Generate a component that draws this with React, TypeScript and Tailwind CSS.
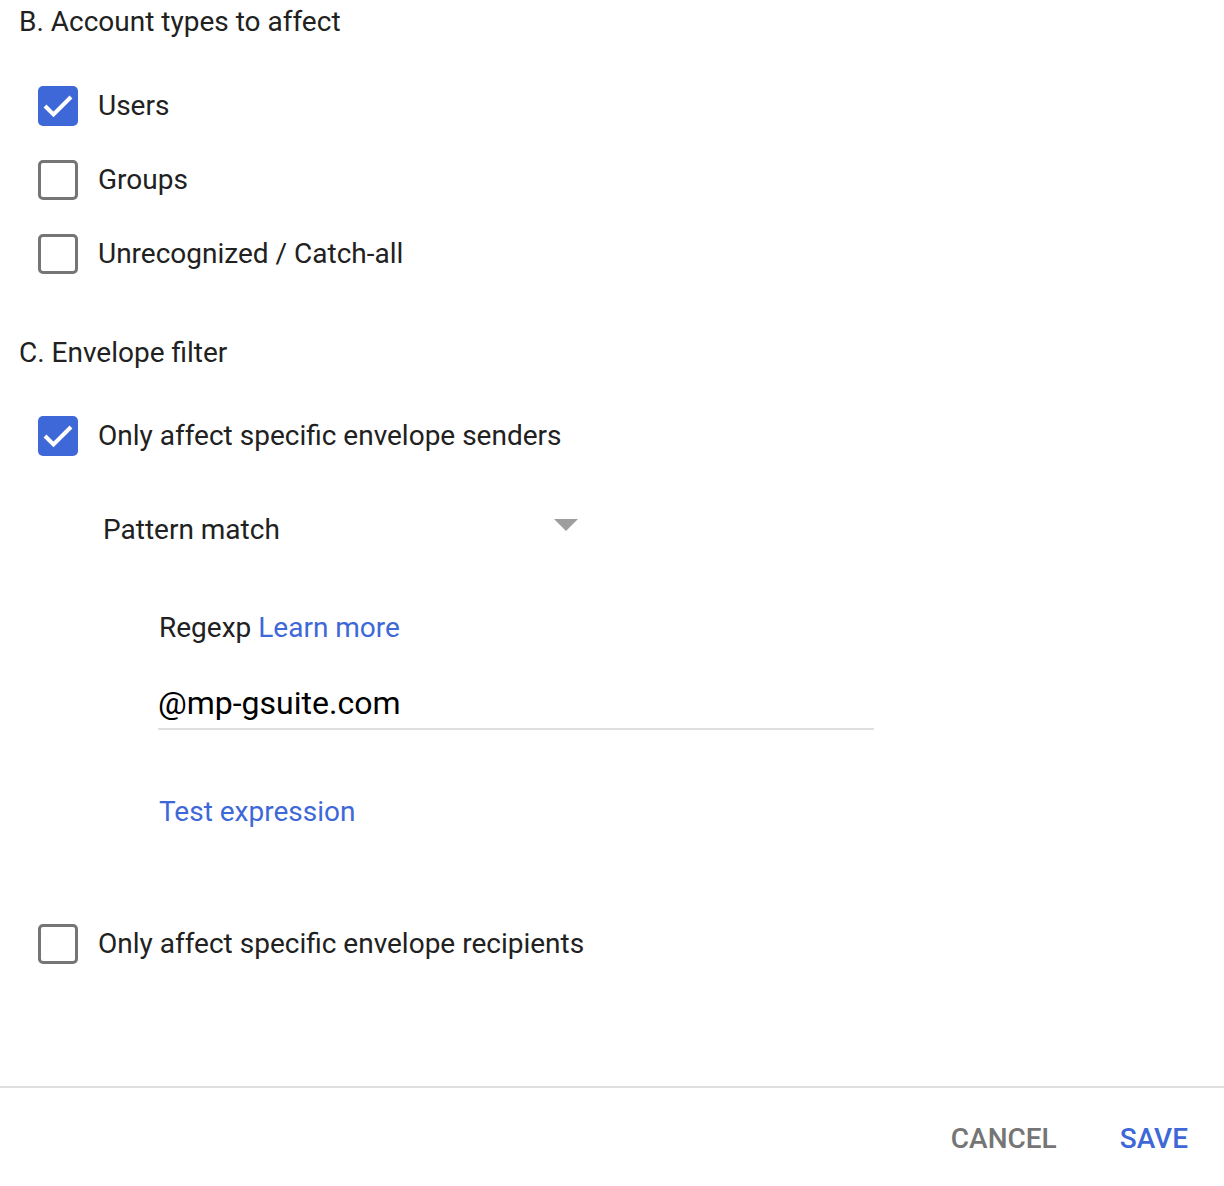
import { useState } from "react";

const Check = ({ checked }: { checked: boolean }) =>
  checked ? (
    <span className="block h-10 w-10 shrink-0 rounded-[5px] bg-[#3e68d7]">
      <svg width="40" height="40" viewBox="0 0 40 40" fill="none">
        <path d="M7 20l8.5 8.5L33 11" stroke="#fff" strokeWidth="4" />
      </svg>
    </span>
  ) : (
    <span className="block h-10 w-10 shrink-0 rounded-[5px] border-[3px] border-[#757575] bg-white" />
  );

const Row = ({ label, checked }: { label: string; checked: boolean }) => {
  const [on, setOn] = useState(checked);
  return (
    <button onClick={() => setOn(!on)} className="flex h-10 items-center gap-5 pl-[38px] text-left">
      <Check checked={on} />
      <span className="text-[28px] text-[#212121]">{label}</span>
    </button>
  );
};

export default function App() {
  return (
    <div className="relative h-[1186px] w-[1224px] overflow-hidden bg-white font-['Roboto',sans-serif]">
      <div className="flex flex-col">
        <h2 className="mt-[4px] pl-[19px] text-[28px] leading-9 text-[#212121]">B. Account types to affect</h2>
        <div className="mt-[46px] flex flex-col gap-[34px]">
          <Row label="Users" checked />
          <Row label="Groups" checked={false} />
          <Row label="Unrecognized / Catch-all" checked={false} />
        </div>
        <h2 className="mt-[61px] pl-[19px] text-[28px] leading-9 text-[#212121]">C. Envelope filter</h2>
        <div className="mt-[45px]">
          <Row label="Only affect specific envelope senders" checked />
        </div>
        <div className="mt-[56px] flex w-[578px] items-center justify-between pl-[103px]">
          <span className="text-[28px] leading-9 text-[#212121]">Pattern match</span>
          <svg width="24" height="12" viewBox="0 0 24 12" className="-mt-[11px]">
            <path d="M0 0h24L12 12z" fill="#9e9e9e" />
          </svg>
        </div>
        <div className="mt-[62px] pl-[159px] text-[28px] leading-9 text-[#212121]">
          Regexp <a className="text-[#3e68d7]">Learn more</a>
        </div>
        <div className="ml-[158px] mt-[39px] w-[716px] border-b-2 border-[#e0e0e0] pb-[7px]">
          <span className="text-[32px] leading-9 text-black">@mp-gsuite.com</span>
        </div>
        <div className="mt-[64px] pl-[159px] text-[28px] leading-9 text-[#3e68d7]">Test expression</div>
        <div className="mt-[94px]">
          <Row label="Only affect specific envelope recipients" checked={false} />
        </div>
      </div>
      <div className="absolute bottom-0 left-0 right-0 flex h-[100px] items-center justify-end gap-[63px] border-t-2 border-[#e0e0e0] pr-[36px] pt-[4px]">
        <button className="text-[28px] font-medium text-[#757575]">CANCEL</button>
        <button className="text-[28px] font-medium text-[#3e68d7]">SAVE</button>
      </div>
    </div>
  );
}
